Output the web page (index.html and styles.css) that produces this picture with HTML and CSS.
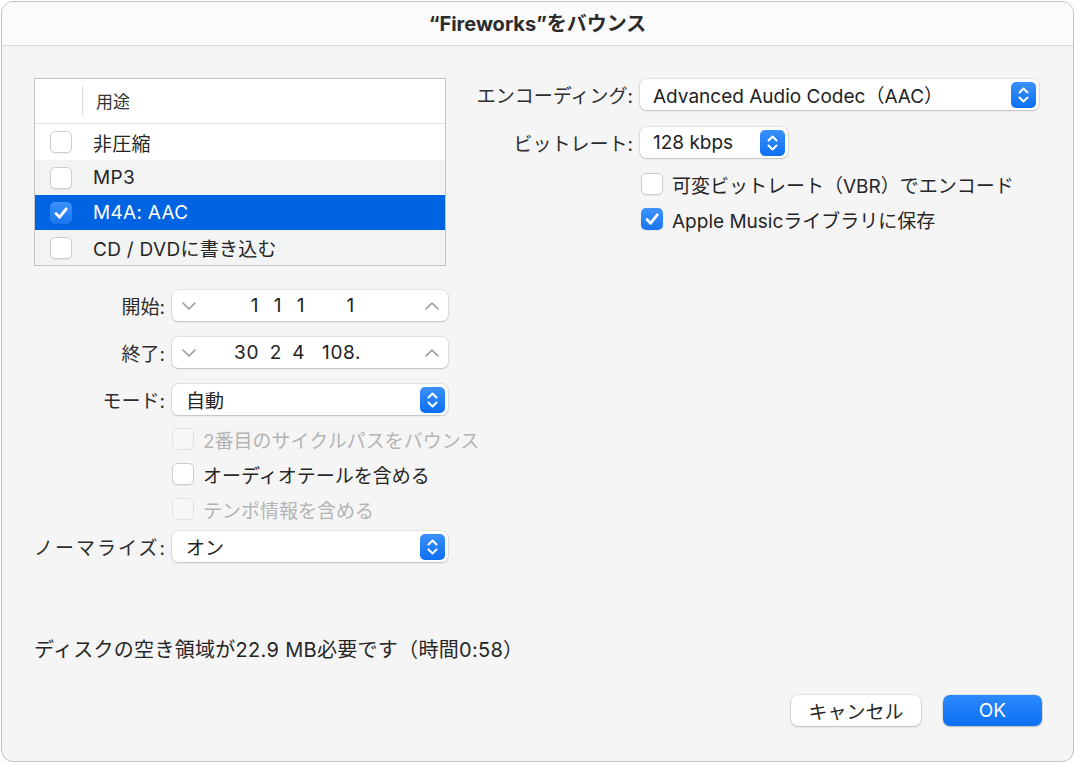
FILE: index.html
```html
<!DOCTYPE html>
<html lang="ja">
<head>
  <meta charset="UTF-8" />
  <meta name="viewport" content="width=device-width, initial-scale=1" />
  <title>“Fireworks”をバウンス</title>
  <link rel="stylesheet" href="styles.css">
</head>
<body>

<div class="window">
  <header class="titlebar">“Fireworks”をバウンス</header>

  <div class="content">
    <div class="columns">

      <div class="left">
        <div class="list">
          <div class="list-head"><span class="divider"></span><span>用途</span></div>
          <div class="list-row first"><span class="check"></span>非圧縮</div>
          <div class="list-row alt"><span class="check"></span>MP3</div>
          <div class="list-row selected">
            <span class="check on"><svg viewBox="0 0 22 22"><path d="M6 11.5 L9.6 15.2 L16.2 6.8" /></svg></span>M4A: AAC
          </div>
          <div class="list-row alt"><span class="check"></span>CD / DVDに書き込む</div>
        </div>

        <div class="form">
          <div class="field-row">
            <label>開始:</label>
            <div class="stepper">
              <svg class="chev" viewBox="0 0 16 10"><path d="M2 2 L8 8 L14 2" /></svg>
              <div class="time">
                <span class="seg s1">1</span><span class="seg s2">1</span><span class="seg s3">1</span><span class="seg s4">1<span class="ghost">.</span></span>
              </div>
              <svg class="chev" viewBox="0 0 16 10"><path d="M2 8 L8 2 L14 8" /></svg>
            </div>
          </div>

          <div class="field-row">
            <label>終了:</label>
            <div class="stepper">
              <svg class="chev" viewBox="0 0 16 10"><path d="M2 2 L8 8 L14 2" /></svg>
              <div class="time">
                <span class="seg s1">30</span><span class="seg s2">2</span><span class="seg s3">4</span><span class="seg s4">108.</span>
              </div>
              <svg class="chev" viewBox="0 0 16 10"><path d="M2 8 L8 2 L14 8" /></svg>
            </div>
          </div>

          <div class="field-row">
            <label>モード:</label>
            <div class="popup">
              <span>自動</span>
              <span class="arrows"><svg viewBox="0 0 24 26"><path d="M8 10.5 L12 6.5 L16 10.5 M8 15.5 L12 19.5 L16 15.5" /></svg></span>
            </div>
          </div>

          <div class="check-row disabled first-check"><span class="check"></span>2番目のサイクルパスをバウンス</div>
          <div class="check-row"><span class="check"></span>オーディオテールを含める</div>
          <div class="check-row disabled"><span class="check"></span>テンポ情報を含める</div>

          <div class="field-row normalize">
            <label class="wide-label">ノーマライズ:</label>
            <div class="popup">
              <span>オン</span>
              <span class="arrows"><svg viewBox="0 0 24 26"><path d="M8 10.5 L12 6.5 L16 10.5 M8 15.5 L12 19.5 L16 15.5" /></svg></span>
            </div>
          </div>
        </div>
      </div>

      <div class="right">
        <div class="field-row encoding">
          <label>エンコーディング:</label>
          <div class="popup wide">
            <span>Advanced Audio Codec（AAC）</span>
            <span class="arrows"><svg viewBox="0 0 24 26"><path d="M8 10.5 L12 6.5 L16 10.5 M8 15.5 L12 19.5 L16 15.5" /></svg></span>
          </div>
        </div>

        <div class="field-row bitrate">
          <label>ビットレート:</label>
          <div class="popup short">
            <span>128 kbps</span>
            <span class="arrows"><svg viewBox="0 0 24 26"><path d="M8 10.5 L12 6.5 L16 10.5 M8 15.5 L12 19.5 L16 15.5" /></svg></span>
          </div>
        </div>

        <div class="check-row vbr"><span class="check"></span>可変ビットレート（VBR）でエンコード</div>
        <div class="check-row library">
          <span class="check on"><svg viewBox="0 0 22 22"><path d="M6 11.5 L9.6 15.2 L16.2 6.8" /></svg></span>Apple Musicライブラリに保存
        </div>
      </div>

    </div>

    <p class="note">ディスクの空き領域が22.9 MB必要です（時間0:58）</p>

    <div class="actions">
      <button class="btn">キャンセル</button>
      <button class="btn primary">OK</button>
    </div>
  </div>
</div>

</body>
</html>
```

FILE: styles.css
```css
body {
  margin: 0;
  background-color: #fff;
  font-family: "Inter", "Noto Sans CJK JP", sans-serif;
  color: #262626;
}
.window {
  box-sizing: border-box;
  width: 1073px;
  height: 761px;
  margin: 1px 0 0 1px;
  border: 1px solid #c2c2c2;
  border-radius: 12px;
  background-color: #f5f5f5;
  overflow: hidden;
}
.titlebar {
  box-sizing: border-box;
  height: 44px;
  padding-bottom: 3px;
  display: flex;
  align-items: center;
  justify-content: center;
  background-color: #fbfbfb;
  border-bottom: 1px solid #dcdcdc;
  font-size: 20px;
  font-weight: 700;
  color: #2b2b2b;
}
.content {
  padding: 32px 31px 0 32px;
}
.columns {
  display: flex;
}
.left {
  width: 414px;
}
.right {
  margin-left: 22px;
}

/* list of file types */
.list {
  width: 412px;
  box-sizing: border-box;
  border: 1px solid #c4c4c4;
  background-color: #fff;
}
.list-head {
  height: 45px;
  display: flex;
  align-items: center;
  padding-bottom: 2px;
  box-sizing: border-box;
  border-bottom: 1px solid #e1e1e1;
  font-size: 17px;
  color: #333;
}
.divider {
  width: 1px;
  height: 29px;
  margin: 0 13px 0 47px;
  background-color: #dcdcdc;
}
.list-row {
  height: 35px;
  display: flex;
  align-items: center;
  padding-left: 15px;
  box-sizing: border-box;
  font-size: 19px;
  letter-spacing: 0.3px;
}
.list-row.first {
  height: 36px;
}
.list-row .check {
  margin-right: 21px;
}
.list-row.alt {
  background-color: #f2f3f3;
}
.list-row.selected {
  background-color: #0063e1;
  color: #fff;
}

/* checkboxes */
.check {
  box-sizing: border-box;
  width: 22px;
  height: 22px;
  flex: none;
  border-radius: 5px;
  border: 1px solid #cdcdcd;
  background-color: #fff;
  box-shadow: 0 1px 1px rgba(0, 0, 0, 0.06);
}
.check.on {
  border: none;
  background: linear-gradient(#3c92fb, #1a76f0);
}
.check svg {
  display: block;
  width: 22px;
  height: 22px;
}
.check path {
  fill: none;
  stroke: #fff;
  stroke-width: 2.8;
  stroke-linecap: round;
  stroke-linejoin: round;
}
.check-row {
  height: 22px;
  display: flex;
  align-items: center;
  font-size: 19px;
  margin-top: 13px;
  white-space: nowrap;
}
.check-row .check {
  margin-right: 9px;
}
.check-row.disabled {
  color: #b4b4b4;
}
.check-row.disabled .check {
  background-color: #f7f7f7;
  border-color: #e2e2e2;
  box-shadow: none;
}

/* left form */
.form {
  margin-top: 24px;
}
.form .check-row {
  padding-left: 138px;
}
.form .first-check {
  margin-top: 13px;
}
.field-row {
  display: flex;
  align-items: center;
  height: 31px;
  margin-top: 16px;
}
.form .field-row:first-child {
  margin-top: 0;
}
.field-row label {
  width: 131px;
  margin-right: 7px;
  text-align: right;
  font-size: 19px;
  color: #2e2e2e;
  white-space: nowrap;
}
.field-row .wide-label {
  letter-spacing: 2px;
  margin-right: 5px;
  width: 133px;
}
.form .normalize {
  margin-top: 11px;
}
.stepper,
.popup {
  box-sizing: border-box;
  width: 276px;
  height: 31px;
  display: flex;
  align-items: center;
  background-color: #fff;
  border-radius: 6px;
  box-shadow: 0 0 0 0.5px rgba(0, 0, 0, 0.14), 0 1px 2px rgba(0, 0, 0, 0.16);
}
.stepper {
  padding: 0 8px 0 9px;
}
.chev {
  width: 16px;
  height: 10px;
  flex: none;
}
.chev path {
  fill: none;
  stroke: #9a9a9a;
  stroke-width: 1.6;
  stroke-linecap: round;
  stroke-linejoin: round;
}
.time {
  flex: 1;
  display: flex;
  padding-left: 34px;
  font-size: 19px;
  letter-spacing: 0.6px;
  color: #222;
}
.seg {
  text-align: right;
}
.s1 { width: 28px; }
.s2 { width: 23px; }
.s3 { width: 23px; }
.s4 { width: 56px; }
.ghost {
  visibility: hidden;
}
.popup {
  justify-content: space-between;
  padding: 0 3px 0 14px;
  font-size: 19px;
  color: #222;
}
.arrows {
  width: 25px;
  height: 26px;
  border-radius: 5px;
  background: linear-gradient(#3b91fc, #0d6ff2);
}
.arrows svg {
  display: block;
  width: 25px;
  height: 26px;
}
.arrows path {
  fill: none;
  stroke: #fff;
  stroke-width: 2;
  stroke-linecap: round;
  stroke-linejoin: round;
}

/* right form */
.right label {
  width: 163px;
}
.right .encoding {
  margin-top: 1px;
}
.right .bitrate {
  margin-top: 17px;
}
.popup.wide {
  width: 399px;
  padding-left: 13px;
}
.popup.short {
  width: 148px;
  padding-left: 13px;
}
.right .check-row {
  padding-left: 171px;
}
.right .vbr {
  margin-top: 15px;
}

/* footer */
.note {
  margin: 76px 0 0 0;
  line-height: 24px;
  font-size: 20px;
  letter-spacing: 0.3px;
  color: #262626;
}
.actions {
  display: flex;
  justify-content: flex-end;
  gap: 22px;
  margin-top: 33px;
}
.btn {
  height: 31px;
  width: 130px;
  border: none;
  border-radius: 7px;
  background-color: #fff;
  box-shadow: 0 0 0 0.5px rgba(0, 0, 0, 0.14), 0 1px 2px rgba(0, 0, 0, 0.18);
  font-family: inherit;
  font-size: 19px;
  color: #262626;
  padding: 0;
}
.btn.primary {
  width: 99px;
  background: linear-gradient(#2d8afd, #0a6ff2);
  color: #fff;
}
```
